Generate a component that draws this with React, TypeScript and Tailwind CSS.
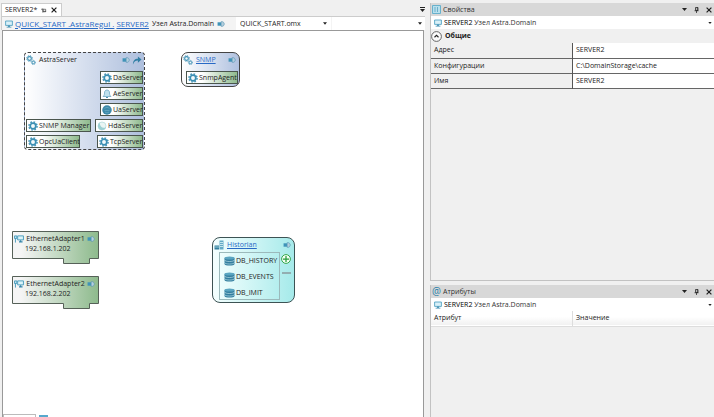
import React from "react";

type IconProps = { className?: string };

function Monitor({ className = "" }: IconProps) {
  return (
    <svg viewBox="0 0 20 20" className={className} aria-hidden="true">
      <path d="M1.5 2.5h17v11h-17z" fill="#d9f0f8" stroke="#4199bd" strokeWidth="2" />
      <path d="M8 14h4v3h4v2H4v-2h4z" fill="#3488ad" />
    </svg>
  );
}

function Gear({ className = "" }: IconProps) {
  return (
    <svg viewBox="0 0 20 20" className={className} aria-hidden="true">
      <circle cx="10" cy="10" r="8.2" fill="none" stroke="#4c9abb" strokeWidth="3" strokeDasharray="3.4 3.04" />
      <circle cx="10" cy="10" r="5.6" fill="#f3fafc" stroke="#3c8fb3" strokeWidth="3.4" />
    </svg>
  );
}

function TwoGears({ className = "" }: IconProps) {
  return (
    <svg viewBox="0 0 20 20" className={className} aria-hidden="true">
      <circle cx="7" cy="7" r="5.6" fill="none" stroke="#3c8fb3" strokeWidth="2" strokeDasharray="2.4 2" />
      <circle cx="7" cy="7" r="3.7" fill="#f3fafc" stroke="#3c8fb3" strokeWidth="2.2" />
      <circle cx="14.8" cy="15" r="4.2" fill="none" stroke="#3c8fb3" strokeWidth="1.6" strokeDasharray="1.8 1.5" />
      <circle cx="14.8" cy="15" r="2.6" fill="#f3fafc" stroke="#3c8fb3" strokeWidth="2" />
    </svg>
  );
}

function Plug({ className = "" }: IconProps) {
  return (
    <svg viewBox="0 0 18 14" className={className} aria-hidden="true">
      <path d="M1 3h8v8H1z" fill="#3f93b8" />
      <path d="M9.5 1.5h2.5c3 .8 4.500 3 4.500 5.500s-1.500 4.700-4.500 5.500H9.500z" fill="#b5d0de" stroke="#5b97b5" strokeWidth="1.6" />
    </svg>
  );
}

function Bell({ className = "" }: IconProps) {
  return (
    <svg viewBox="0 0 20 20" className={className} aria-hidden="true">
      <path d="M10 2c-4 0-5 3-5 6 0 4-1 5-3 7h16c-2-2-3-3-3-7 0-3-1-6-5-6z" fill="#bfe1ed" stroke="#6eaac4" strokeWidth="1.6" />
      <path d="M8 17h4" stroke="#4b93b2" strokeWidth="2.400" />
    </svg>
  );
}

function Globe({ className = "" }: IconProps) {
  return (
    <svg viewBox="0 0 20 20" className={className} aria-hidden="true">
      <circle cx="10" cy="10" r="9.5" fill="#3c89a9" />
      <path d="M5 7c3-3 7-3 10 0M5 11h10M6 14c3 2 5 2 8 0" fill="none" stroke="#76b2ca" strokeWidth="1.2" />
    </svg>
  );
}

function Swirl({ className = "" }: IconProps) {
  return (
    <svg viewBox="0 0 20 20" className={className} aria-hidden="true">
      <circle cx="10" cy="10" r="8" fill="#eaf5f4" stroke="#b5dcdd" strokeWidth="1.5" />
      <path d="M5 3c-5 5-4 13 3 15 5 1 9-2 10-6-5 4-12 1-13-9z" fill="#9ccfd3" />
    </svg>
  );
}

function Database({ className = "" }: IconProps) {
  return (
    <svg viewBox="0 0 22 20" className={className} aria-hidden="true">
      <path d="M1 4v12c0 4 20 4 20 0V4z" fill="#337e9f" />
      <ellipse cx="11" cy="4" rx="10" ry="3" fill="#5aa5c1" />
      <path d="M1 8c1 4 19 4 20 0M1 13c1 4 19 4 20 0" fill="none" stroke="#c2e6ec" strokeWidth="1.3" />
    </svg>
  );
}

function HistoryServer({ className = "" }: IconProps) {
  return (
    <svg viewBox="0 0 20 20" className={className} aria-hidden="true">
      <path d="M11 1h8v18h-8z" fill="#63aac5" />
      <path d="M12 5h6M12 9h6M12 13h6" stroke="#e4f8fa" strokeWidth="1.5" />
      <path d="M1 11h9v8H1z" fill="#347f9f" />
      <path d="M1 14h9" stroke="#b9e5e9" strokeWidth="1.500" />
    </svg>
  );
}

function NetworkCard({ className = "" }: IconProps) {
  return (
    <svg viewBox="0 0 22 18" className={className} aria-hidden="true">
      <path d="M1 2h5v6H1zM3 8v9" fill="#cae9f2" stroke="#3e96b9" strokeWidth="2" />
      <path d="M8 2h13v9H8z" fill="#dcf3f8" stroke="#3e96b9" strokeWidth="2" />
      <path d="M13 12h3v2h3v3h-8v-3h2z" fill="#3485aa" />
    </svg>
  );
}

function ShareArrow({ className = "" }: IconProps) {
  return (
    <svg viewBox="0 0 22 20" className={className} aria-hidden="true">
      <path d="M2 19C2 10 6 6 13 6V1l8 7-8 7v-5c-5 0-8 2-11 9z" fill="#317fa5" />
    </svg>
  );
}

function Caret({ className = "" }: IconProps) {
  return (
    <svg viewBox="0 0 10 6" className={className} aria-hidden="true">
      <path d="M0 0h10L5 6z" fill="#222" />
    </svg>
  );
}

function Cross({ className = "" }: IconProps) {
  return (
    <svg viewBox="0 0 10 10" className={className} aria-hidden="true">
      <path d="M1 1l8 8M9 1L1 9" stroke="#1e1e1e" strokeWidth="2" />
    </svg>
  );
}

function Pin({ className = "" }: IconProps) {
  return (
    <svg viewBox="0 0 10 12" className={className} aria-hidden="true">
      <path d="M3 1h5v6H3zM1 7.500h8M5 8v4M6.500 1v6" fill="none" stroke="#222" strokeWidth="1.500" />
    </svg>
  );
}

function SidePin({ className = "" }: IconProps) {
  return (
    <svg viewBox="0 0 14 12" className={className} aria-hidden="true">
      <path d="M5 3h6v6H5zM4 1v10M0 3h4M5 8h7" fill="none" stroke="#333" strokeWidth="1.500" />
    </svg>
  );
}

function Service({ icon, label, className }: { icon: React.ReactNode; label: string; className: string }) {
  return (
    <div className={`flex h-[13px] items-center gap-px border border-[#4a554d] bg-linear-to-r from-white from-30% to-[#8fba8e] pl-px whitespace-nowrap ${className}`}>
      {icon}
      <span>{label}</span>
    </div>
  );
}

function Adapter({ name, address, className }: { name: string; address: string; className: string }) {
  return (
    <div className={`absolute h-[34px] w-[87px] ${className}`}>
      <svg viewBox="0 0 87 34" className="absolute inset-0 size-full" aria-hidden="true">
        <defs>
          <linearGradient id={name}>
            <stop offset="0.1" stopColor="#f5f5f5" />
            <stop offset="1" stopColor="#8dba8c" />
          </linearGradient>
        </defs>
        <path d="M.5.5h86v27h-9v5h-26v-5H.5z" fill={`url(#${name})`} stroke="#566158" />
      </svg>
      <div className="relative flex items-center justify-between pt-0.5 pr-1 pl-0.5 leading-[11px]">
        <NetworkCard className="h-2 w-2.5" />
        <span>{name}</span>
        <Plug className="h-1.5 w-2" />
      </div>
      <div className="relative pl-[13px] leading-[9px]">{address}</div>
    </div>
  );
}

function PanelHeader({ icon, title }: { icon: React.ReactNode; title: string }) {
  return (
    <header className="flex h-[13px] items-center bg-[#d8d8d8] pr-0.5 pl-px text-[#333]">
      {icon}
      <h2 className="ml-0.5 flex-1">{title}</h2>
      <div className="flex items-center gap-[7px]">
        <button aria-label="Меню"><Caret className="h-[3px] w-[5px]" /></button>
        <button aria-label="Закрепить"><Pin className="h-1.5 w-[5px]" /></button>
        <button aria-label="Закрыть"><Cross className="size-1.5" /></button>
      </div>
    </header>
  );
}

function ObjectPicker() {
  return (
    <button aria-haspopup="listbox" className="flex h-[13px] w-full items-center bg-white pr-0.5 pl-[3px] text-left">
      <Monitor className="mr-0.5 size-2" />
      <span className="flex-1 text-[#333]">
        <span className="font-medium text-black">SERVER2</span> Узел Astra.Domain
      </span>
      <Caret className="h-0.5 w-1" />
    </button>
  );
}

const properties = [
  ["Адрес", "SERVER2"],
  ["Конфигурации", "C:\\DomainStorage\\cache"],
  ["Имя", "SERVER2"],
];

const databases = ["DB_HISTORY", "DB_EVENTS", "DB_IMIT"];

export default function App() {
  return (
    <div className="flex h-screen overflow-hidden bg-[#f0f0f0] font-['Open_Sans','Noto_Sans',sans-serif] text-[7px] leading-[10px] text-[#222]">
      <main className="flex min-w-0 flex-1 flex-col pt-[3px]">
        <div className="flex h-[13px] items-center justify-between pr-0.5 pl-px">
          <div className="flex h-full w-[61px] items-center gap-1 border border-b-0 border-[#ccc] bg-white pl-[3px]">
            <span>SERVER2*</span>
            <button aria-label="Закрепить вкладку"><SidePin className="h-[5px] w-1.5" /></button>
            <button aria-label="Закрыть вкладку"><Cross className="size-1.5" /></button>
          </div>
          <button aria-label="Список вкладок" className="flex flex-col items-center gap-px">
            <span className="h-px w-[5px] bg-[#222]" />
            <Caret className="h-[3px] w-[5px]" />
          </button>
        </div>
        <div className="mr-0.5 ml-px flex h-[14px] items-center border-t border-l border-[#ccc] bg-[#f4f4f4] pl-[3px]">
          <Monitor className="mr-0.5 size-2" />
          <nav className="flex flex-1 items-center whitespace-nowrap">
            <a href="#root" className="text-[8px] text-[#2869c5] underline">QUICK_START .AstraRegul .</a>
            <a href="#server2" className="ml-0.5 text-[8px] text-[#2869c5] underline">SERVER2</a>
            <span className="ml-[3px]">Узел Astra.Domain</span>
            <Plug className="ml-[3px] h-1.5 w-2" />
          </nav>
          <div className="relative h-full w-[95px] bg-white">
            <select aria-label="Файл" className="size-full appearance-none pl-1 leading-[13px]">
              <option>QUICK_START.omx</option>
            </select>
            <Caret className="pointer-events-none absolute top-[5px] right-1 h-[3px] w-1" />
          </div>
          <div className="relative ml-px h-full w-[93px] bg-white">
            <select aria-label="Элемент" className="size-full appearance-none" />
            <Caret className="pointer-events-none absolute top-[5px] right-[3px] h-[3px] w-1" />
          </div>
        </div>
        <section aria-label="Схема" className="relative mr-[3px] ml-0.5 flex-1 border border-b-0 border-[#999] bg-white">
          <div className="absolute top-[21px] left-[21px] h-[98px] w-[121px] rounded-[4px] border border-dashed border-[#444] bg-linear-to-r from-white to-[#aebfdd]">
            <div className="flex h-[14px] items-center pr-0.5 pl-px">
              <TwoGears className="mr-[3px] size-2.5" />
              <span className="flex-1">AstraServer</span>
              <Plug className="mr-0.5 h-1.5 w-2" />
              <ShareArrow className="h-[9px] w-2.5" />
            </div>
            <div className="mt-1 flex flex-col gap-[3px] px-px">
              <Service className="ml-auto w-[43px]" icon={<Gear className="size-2.5 shrink-0" />} label="DaServer" />
              <Service className="ml-auto w-[43px]" icon={<Bell className="size-2.5 shrink-0" />} label="AeServer" />
              <Service className="ml-auto w-[43px]" icon={<Globe className="size-2.5 shrink-0" />} label="UaServer" />
              <div className="flex justify-between">
                <Service className="w-[65px]" icon={<Gear className="size-2.5 shrink-0" />} label="SNMP Manager" />
                <Service className="w-[48px]" icon={<Swirl className="size-2.5 shrink-0" />} label="HdaServer" />
              </div>
              <div className="flex justify-between">
                <Service className="w-[54px]" icon={<Gear className="size-2.5 shrink-0" />} label="OpcUaClient" />
                <Service className="w-[46px]" icon={<Gear className="size-2.5 shrink-0" />} label="TcpServer" />
              </div>
            </div>
          </div>

          <div className="absolute top-[21px] left-[178px] h-[35px] w-[59px] rounded-[7px] border border-[#444] bg-linear-to-r from-white to-[#b0c1df]">
            <div className="flex h-[14px] items-center pr-[3px] pl-px">
              <TwoGears className="mr-[3px] size-2.5" />
              <a href="#snmp" className="flex-1 text-[#2869c5] underline">SNMP</a>
              <Plug className="h-1.5 w-2" />
            </div>
            <Service className="mt-1 ml-1 w-[52px]" icon={<Gear className="size-2.5 shrink-0" />} label="SnmpAgent" />
          </div>

          <Adapter className="top-[200px] left-[9px]" name="EthernetAdapter1" address="192.168.1.202" />
          <Adapter className="top-[245px] left-[9px]" name="EthernetAdapter2" address="192.168.2.202" />

          <div className="absolute top-[206px] left-[209px] h-[66px] w-[83px] rounded-[8px] border border-[#3d5354] bg-linear-to-r from-[#f4ffff] to-[#a5eaea]">
            <div className="flex h-[14px] items-center pr-[3px] pl-px">
              <HistoryServer className="mr-[3px] size-2.5" />
              <a href="#historian" className="flex-1 text-[#2869c5] underline">Historian</a>
              <Plug className="h-1.5 w-2" />
            </div>
            <div className="flex gap-px pl-1.5">
              <ul className="h-[48px] w-[61px] border border-[#9bb9bb] pl-1">
                {databases.map((name) => (
                  <li key={name} className="flex h-[16px] items-center gap-px">
                    <Database className="h-2.5 w-[11px] shrink-0" />
                    {name}
                  </li>
                ))}
              </ul>
              <div className="flex flex-col items-center gap-2 pt-0.5">
                <button aria-label="Добавить базу">
                  <svg viewBox="0 0 20 20" className="size-2.5" aria-hidden="true">
                    <circle cx="10" cy="10" r="8.800" fill="#f4fff4" stroke="#35a64a" strokeWidth="2" />
                    <path d="M10 4v12M4 10h12" stroke="#269c3c" strokeWidth="2.500" />
                  </svg>
                </button>
                <button aria-label="Удалить базу" className="h-0.5 w-[9px] bg-[#93aeb1]" />
              </div>
            </div>
          </div>
        </section>
        <div className="mr-[3px] ml-0.5 flex h-[3px] gap-[3px] border-x border-[#999] bg-white">
          <div className="w-[33px] border border-b-0 border-[#bbb]" />
          <div className="mt-px h-0.5 w-[9px] bg-[#58a9cd]" />
        </div>
      </main>

      <aside className="ml-[3px] flex w-[284px] shrink-0 flex-col pt-[3px]">
        <section aria-label="Свойства" className="flex h-[278px] flex-col border-b border-l border-[#c2c2c2]">
          <PanelHeader
            title="Свойства"
            icon={
              <svg viewBox="0 0 18 18" className="size-[9px]" aria-hidden="true">
                <path d="M1 1h16v16H1z" fill="#b8e0ed" stroke="#67b1cc" strokeWidth="2" />
                <path d="M6 4v10M11 4v10" stroke="#549fbe" strokeWidth="1.500" />
              </svg>
            }
          />
          <ObjectPicker />
          <button className="flex h-[14px] w-full items-center gap-[3px] text-left font-bold">
            <svg viewBox="0 0 22 22" className="size-[11px]" aria-hidden="true">
              <circle cx="11" cy="11" r="9.800" fill="#fafafa" stroke="#555" strokeWidth="1.800" />
              <path d="M7 12.500l4-4 4 4" fill="none" stroke="#222" strokeWidth="2.200" />
            </svg>
            Общие
          </button>
          <table className="w-full table-fixed border-collapse">
            <tbody>
              {properties.map(([label, value]) => (
                <tr key={label} className="h-[15px] border-b border-[#666]">
                  <th scope="row" className="w-1/2 border-r border-[#555] py-0 pl-[3px] text-left font-normal">{label}</th>
                  <td className="bg-white py-0 pl-[3px]">{value}</td>
                </tr>
              ))}
            </tbody>
          </table>
        </section>
        <section aria-label="Атрибуты" className="mt-1 flex-1 border-l border-[#c2c2c2]">
          <PanelHeader
            title="Атрибуты"
            icon={<span className="w-[9px] text-[10px] leading-[11px] text-[#297ea7]">@</span>}
          />
          <ObjectPicker />
          <table className="w-full table-fixed border-collapse">
            <thead>
              <tr className="h-[15px] border-b border-[#ddd] bg-linear-to-b from-white from-40% to-[#f1f1f1]">
                <th scope="col" className="w-1/2 border-r border-[#ddd] py-0 pl-[3px] text-left font-normal">Атрибут</th>
                <th scope="col" className="py-0 pl-[3px] text-left font-normal">Значение</th>
              </tr>
            </thead>
          </table>
        </section>
      </aside>
    </div>
  );
}
